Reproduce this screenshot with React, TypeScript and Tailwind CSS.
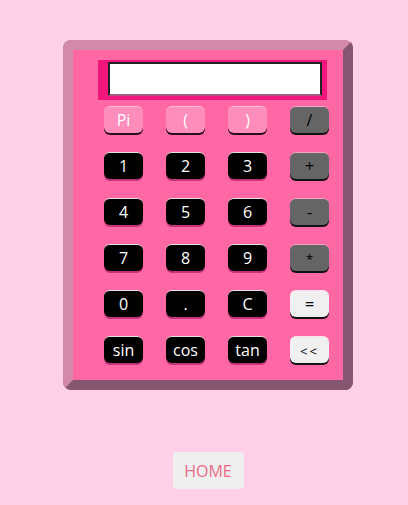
import React from 'react';

type Key = { label: string; kind: 'pink' | 'dark' | 'gray' | 'light' };

const keys: Key[] = [
  { label: 'Pi', kind: 'pink' },
  { label: '(', kind: 'pink' },
  { label: ')', kind: 'pink' },
  { label: '/', kind: 'gray' },
  { label: '1', kind: 'dark' },
  { label: '2', kind: 'dark' },
  { label: '3', kind: 'dark' },
  { label: '+', kind: 'gray' },
  { label: '4', kind: 'dark' },
  { label: '5', kind: 'dark' },
  { label: '6', kind: 'dark' },
  { label: '-', kind: 'gray' },
  { label: '7', kind: 'dark' },
  { label: '8', kind: 'dark' },
  { label: '9', kind: 'dark' },
  { label: '*', kind: 'gray' },
  { label: '0', kind: 'dark' },
  { label: '.', kind: 'dark' },
  { label: 'C', kind: 'dark' },
  { label: '=', kind: 'light' },
  { label: 'sin', kind: 'dark' },
  { label: 'cos', kind: 'dark' },
  { label: 'tan', kind: 'dark' },
  { label: '<<', kind: 'light' },
];

const styles = {
  pink: 'bg-[#ff8dbb] text-white border-t-[#ffc4dc] shadow-[0_2px_0_#2a0d18]',
  dark: 'bg-black text-white border-t-[#e2e2e2] shadow-[0_2px_0_#c2337a]',
  gray: 'bg-[#656565] text-black border-t-[#f2a6c6] shadow-[0_2px_0_#111]',
  light: 'bg-[#f0f0f0] text-black border-t-[#ffe0ee] shadow-[0_2px_0_#111]',
};

export default function App() {
  return (
    <div
      className="min-h-[505px] w-[408px] bg-[#ffd0e8] pt-10"
      style={{ fontFamily: '"Open Sans", "Noto Sans", sans-serif' }}
    >
      {/* calculator body */}
      <div className="ml-[63px] h-[350px] w-[290px] rounded-lg border-[10px] border-t-[#d389aa] border-l-[#d389aa] border-b-[#855670] border-r-[#855670] bg-[#ff68a5]">
        <div className="ml-[25px] mt-[10px] h-10 w-[229px] bg-[#f1167c] pl-[10px] pt-[2px]">
          <input
            className="h-[34px] w-[214px] border-2 border-[#222] border-b-[#a45b7c] bg-white outline-none"
            readOnly
          />
        </div>
        <div className="ml-[31px] mt-[6px] grid grid-cols-[40px_40px_40px_40px] gap-x-[22px] gap-y-[19px]">
          {keys.map((k) => (
            <button
              key={k.label}
              className={`h-[27px] w-[39px] rounded-md border-t text-[16px] leading-none ${styles[k.kind]}`}
            >
              {k.label === '<<' ? (
                <span className="text-[13px] tracking-[2px]">&lt;&lt;</span>
              ) : k.label === '*' ? (
                <span className="text-[13px]">*</span>
              ) : (
                k.label
              )}
            </button>
          ))}
        </div>
      </div>
      <div className="mt-[62px] flex justify-center pl-2">
        <button className="h-[37px] w-[71px] rounded bg-[#efefef] text-[16px] text-[#ec6a85]">HOME</button>
      </div>
    </div>
  );
}
